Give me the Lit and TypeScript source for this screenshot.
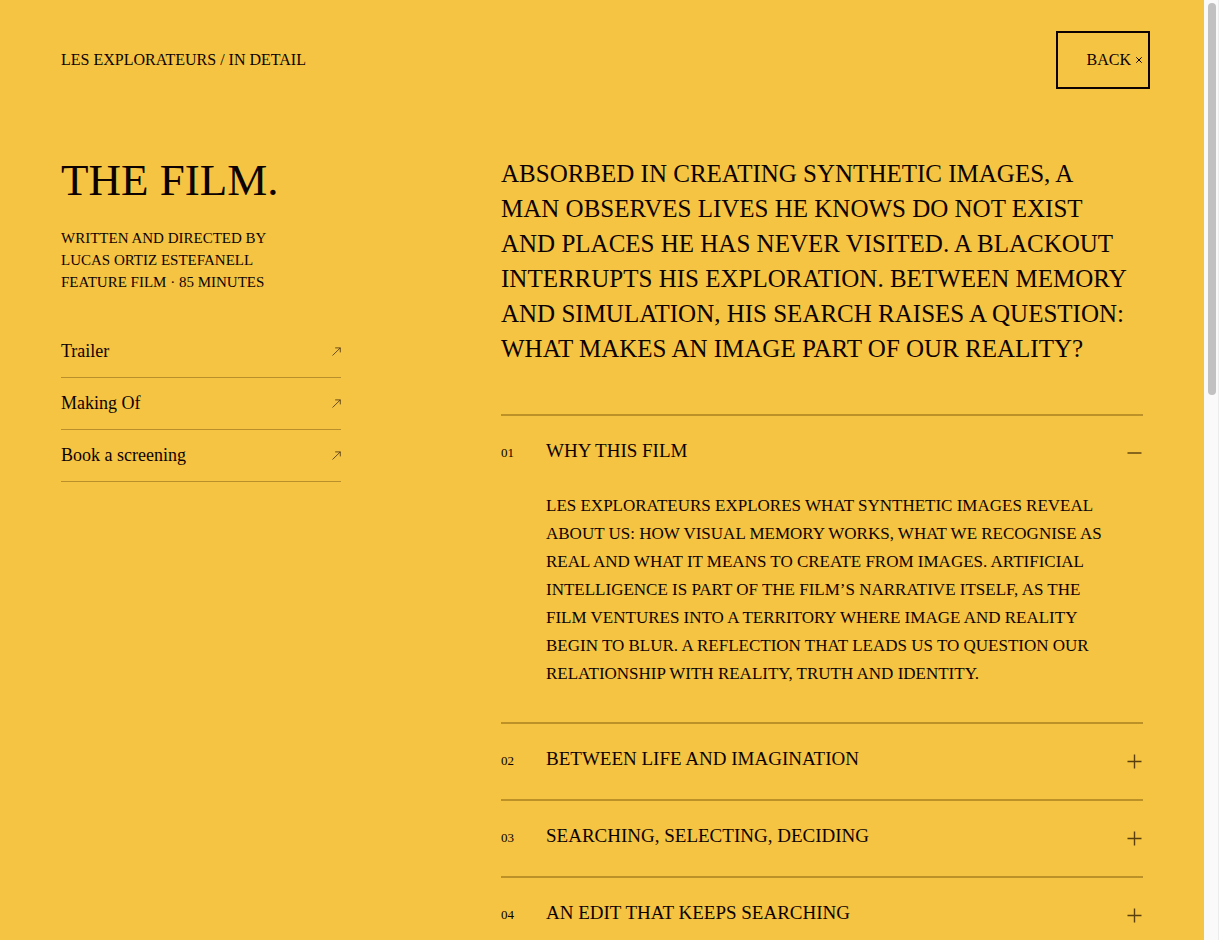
import { LitElement, html, css } from "lit";
import { customElement, state } from "lit/decorators.js";

interface Chapter {
  title: string;
  body?: string[];
}

const LINKS = ["Trailer", "Making Of", "Book a screening"];

const CREDITS = [
  "Written and directed by",
  "Lucas Ortiz Estefanell",
  "Feature film · 85 minutes",
];

const INTRO = [
  "Absorbed in creating synthetic images, a",
  "man observes lives he knows do not exist",
  "and places he has never visited. A blackout",
  "interrupts his exploration. Between memory",
  "and simulation, his search raises a question:",
  "what makes an image part of our reality?",
];

const CHAPTERS: Chapter[] = [
  {
    title: "Why this film",
    body: [
      "Les Explorateurs explores what synthetic images reveal",
      "about us: how visual memory works, what we recognise as",
      "real and what it means to create from images. Artificial",
      "intelligence is part of the film’s narrative itself, as the",
      "film ventures into a territory where image and reality",
      "begin to blur. A reflection that leads us to question our",
      "relationship with reality, truth and identity.",
    ],
  },
  { title: "Between life and imagination" },
  { title: "Searching, selecting, deciding" },
  { title: "An edit that keeps searching" },
];

@customElement("app-root")
export class AppRoot extends LitElement {
  @state() private open = 0;

  static styles = css`
    :host {
      display: grid;
      grid-template-columns: minmax(0, 1fr) 15px;
      height: 100vh;
      background: #f5c443;
      color: #0d0202;
      font-family: "Liberation Serif", serif;
    }
    * {
      box-sizing: border-box;
      margin: 0;
    }
    button {
      background: none;
      border: 0;
      padding: 0;
      color: inherit;
      font: inherit;
      text-transform: inherit;
      cursor: pointer;
    }
    .page {
      overflow-y: auto;
      scrollbar-width: none;
      padding: 38px 61px 0;
    }
    .top {
      display: flex;
      justify-content: space-between;
      align-items: center;
      font-size: 16px;
      line-height: 24px;
      text-transform: uppercase;
    }
    .back {
      display: flex;
      align-items: center;
      justify-content: flex-end;
      gap: 4px;
      width: 80px;
      height: 44px;
      outline: 2px solid #0d0202;
      outline-offset: 5px;
    }
    .cross {
      width: 8px;
      height: 8px;
    }
    .columns {
      display: grid;
      grid-template-columns: 280px minmax(0, 1fr);
      gap: 160px;
      padding-top: 74px;
    }
    h1 {
      font-size: 45px;
      line-height: 48px;
      font-weight: 400;
      text-transform: uppercase;
    }
    .credits {
      padding-top: 23px;
      font-size: 15px;
      line-height: 22px;
      text-transform: uppercase;
    }
    .links {
      padding-top: 33px;
    }
    .link {
      display: flex;
      justify-content: space-between;
      align-items: center;
      height: 52px;
      border-bottom: 1px solid #b88f2a;
      color: inherit;
      font-size: 18px;
      text-decoration: none;
    }
    .arrow {
      width: 9px;
      height: 9px;
      color: #4a300a;
    }
    svg {
      display: block;
      fill: none;
      stroke: currentColor;
    }
    .intro {
      font-size: 25px;
      line-height: 35px;
      text-transform: uppercase;
      white-space: nowrap;
      padding-bottom: 48px;
    }
    .chapter {
      border-top: 2px solid #bc9228;
    }
    h2 {
      font: inherit;
    }
    .toggle {
      display: grid;
      grid-template-columns: 45px 1fr auto;
      align-items: center;
      width: 100%;
      height: 75px;
      padding-right: 1px;
      text-align: left;
      text-transform: uppercase;
      font-size: 19px;
      line-height: 24px;
    }
    .number {
      font-size: 13px;
      padding-bottom: 2px;
    }
    .title {
      padding-bottom: 6px;
    }
    .sign {
      width: 15px;
      height: 15px;
      color: #5a3f0c;
    }
    .body {
      padding: 1px 0 34px 45px;
      font-size: 17px;
      line-height: 28px;
      text-transform: uppercase;
      white-space: nowrap;
    }
    .track {
      background: #fafafa;
      border-right: 1px solid #ececec;
      padding: 3px 2px 3px 4px;
    }
    .thumb {
      height: 42%;
      border-radius: 4px;
      background: #c1c1c1;
    }
  `;

  private lines(text: string[]) {
    return text.map((line, i) => (i ? html`<br />${line}` : line));
  }

  private chapter(item: Chapter, index: number) {
    const expanded = this.open === index;
    return html`
      <section class="chapter">
        <h2>
          <button
            class="toggle"
            aria-expanded=${expanded}
            @click=${() => (this.open = expanded ? -1 : index)}
          >
            <span class="number">0${index + 1}</span>
            <span class="title">${item.title}</span>
            <svg class="sign" viewBox="0 0 15 15" aria-hidden="true">
              <path d=${expanded ? "M0.5 7H14.5" : "M0.5 7.5H14.5M7.5 0.5V14.5"} stroke-width="1.4" />
            </svg>
          </button>
        </h2>
        ${expanded && item.body ? html`<p class="body">${this.lines(item.body)}</p>` : ""}
      </section>
    `;
  }

  render() {
    return html`
      <main class="page">
        <header class="top">
          <span>Les Explorateurs / In detail</span>
          <button class="back">
            Back
            <svg class="cross" viewBox="0 0 8 8" aria-hidden="true">
              <path d="M1.3 1.3L6.7 6.7M6.7 1.3L1.3 6.7" stroke-width="1" />
            </svg>
          </button>
        </header>
        <div class="columns">
          <aside>
            <h1>The film.</h1>
            <p class="credits">${this.lines(CREDITS)}</p>
            <nav class="links">
              ${LINKS.map(
                (label) => html`
                  <a class="link" href="#">
                    ${label}
                    <svg class="arrow" viewBox="0 0 9 9" aria-hidden="true">
                      <path d="M0.5 8.5L8.3 0.9M3.2 0.9H8.3V5.4" stroke-width="0.8" />
                    </svg>
                  </a>
                `
              )}
            </nav>
          </aside>
          <div>
            <p class="intro">${this.lines(INTRO)}</p>
            ${CHAPTERS.map((item, i) => this.chapter(item, i))}
          </div>
        </div>
      </main>
      <div class="track" aria-hidden="true"><div class="thumb"></div></div>
    `;
  }
}
